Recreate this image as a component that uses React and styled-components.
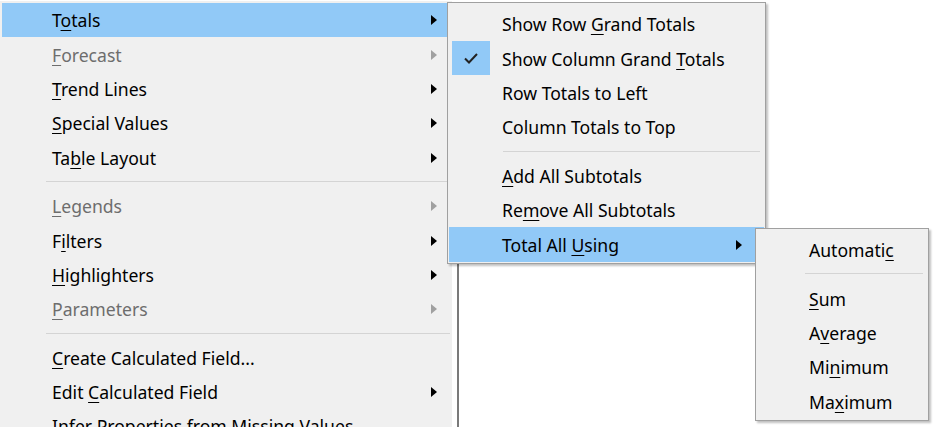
import React from "react";
import styled, { createGlobalStyle } from "styled-components";

const G = createGlobalStyle`
  html,body{margin:0;padding:0;background:#fff;overflow:hidden;}
  body{width:936px;height:427px;font-family:"Noto Sans","Open Sans",sans-serif;}
`;
const Page = styled.div`position:relative;width:936px;height:427px;background:#fff;overflow:hidden;`;
const Menu = styled.div`
  position:absolute;left:${p=>p.x}px;top:${p=>p.y}px;width:${p=>p.w}px;
  background:#f0f0f0;border:1px solid ${p=>p.bare?"transparent":"#a0a0a0"};
  box-shadow:${p=>p.bare?"none":"2px 2px 2px rgba(0,0,0,0.25)"};
  padding:${p=>p.bare?"1px":"4px 1px 1px"};box-sizing:border-box;display:flex;flex-direction:column;
`;
const Row = styled.div`
  height:34.4px;display:flex;align-items:center;position:relative;
  background:${p=>p.hl?"#91c9f7":"transparent"};
  color:${p=>p.dis?"#6d6d6d":"#000"};font-size:17.6px;
  padding-left:${p=>p.pad}px;
`;
const Label = styled.span`flex:1;white-space:nowrap;`;
const U = styled.span`text-decoration:underline;text-underline-offset:3px;`;
const Arrow = styled.span`
  width:0;height:0;border-top:5px solid transparent;border-bottom:5px solid transparent;
  border-left:6px solid ${p=>p.dis?"#a0a0a0":"#000"};margin-right:${p=>p.mr}px;
`;
const Check = styled.div`
  position:absolute;left:3px;top:0;width:38px;height:34px;background:#91c9f7;
  display:flex;align-items:center;justify-content:center;
`;
const Sep = styled.div`height:1px;background:#d4d4d4;margin:${p=>p.m};`;
const VLine = styled.div`position:absolute;left:457px;top:262px;width:2px;height:170px;background:#7a7a7a;`;

const L = ({t,u}) => { if(u==null) return t; return <>{t.slice(0,u)}<U>{t[u]}</U>{t.slice(u+1)}</>; };

export default function App(){
  const main=[
    ["Totals",1,1,0,1],["Forecast",0,1,1],["Trend Lines",0,1],["Special Values",0,1],["Table Layout",2,1],"s",
    ["Legends",0,1,1],["Filters",1,1],["Highlighters",0,1],["Parameters",0,1,1],"s",
    ["Create Calculated Field...",0,0],["Edit Calculated Field",5,1],["Infer Properties from Missing Values",null,0]
  ];
  return <Page><G/>
    <Menu x={0} y={1} w={452} bare>
      {main.map((m,i)=>m==="s"?<Sep key={i} m="6px 0 7px 44px"/>:
        <Row key={i} pad={50} hl={m[4]} dis={m[3]}><Label><L t={m[0]} u={m[1]}/></Label>{m[2]?<Arrow dis={m[3]} mr={13}/>:null}</Row>)}
    </Menu>
    <VLine/>
    <Menu x={447} y={2} w={319}>
      <Row pad={53}><Label><L t="Show Row Grand Totals" u={9}/></Label></Row>
      <Row pad={53}><Check><svg width="16" height="12" viewBox="0 0 16 12"><path d="M2 6.5l4 4L14 2" fill="none" stroke="#222" strokeWidth="2"/></svg></Check><Label><L t="Show Column Grand Totals" u={18}/></Label></Row>
      <Row pad={53}><Label>Row Totals to Left</Label></Row>
      <Row pad={53}><Label>Column Totals to Top</Label></Row>
      <Sep m="6px 4px 7px 54px"/>
      <Row pad={53}><Label><L t="Add All Subtotals" u={0}/></Label></Row>
      <Row pad={53}><Label><L t="Remove All Subtotals" u={2}/></Label></Row>
      <Row pad={53} hl><Label><L t="Total All Using" u={10}/></Label><Arrow mr={22}/></Row>
    </Menu>
    <Menu x={755} y={228} w={174}>
      <Row pad={52}><Label><L t="Automatic" u={8}/></Label></Row>
      <Sep m="6px 4px 7px 48px"/>
      <Row pad={52}><Label><L t="Sum" u={0}/></Label></Row>
      <Row pad={52}><Label><L t="Average" u={1}/></Label></Row>
      <Row pad={52}><Label><L t="Minimum" u={2}/></Label></Row>
      <Row pad={52}><Label><L t="Maximum" u={2}/></Label></Row>
    </Menu>
  </Page>;
}
